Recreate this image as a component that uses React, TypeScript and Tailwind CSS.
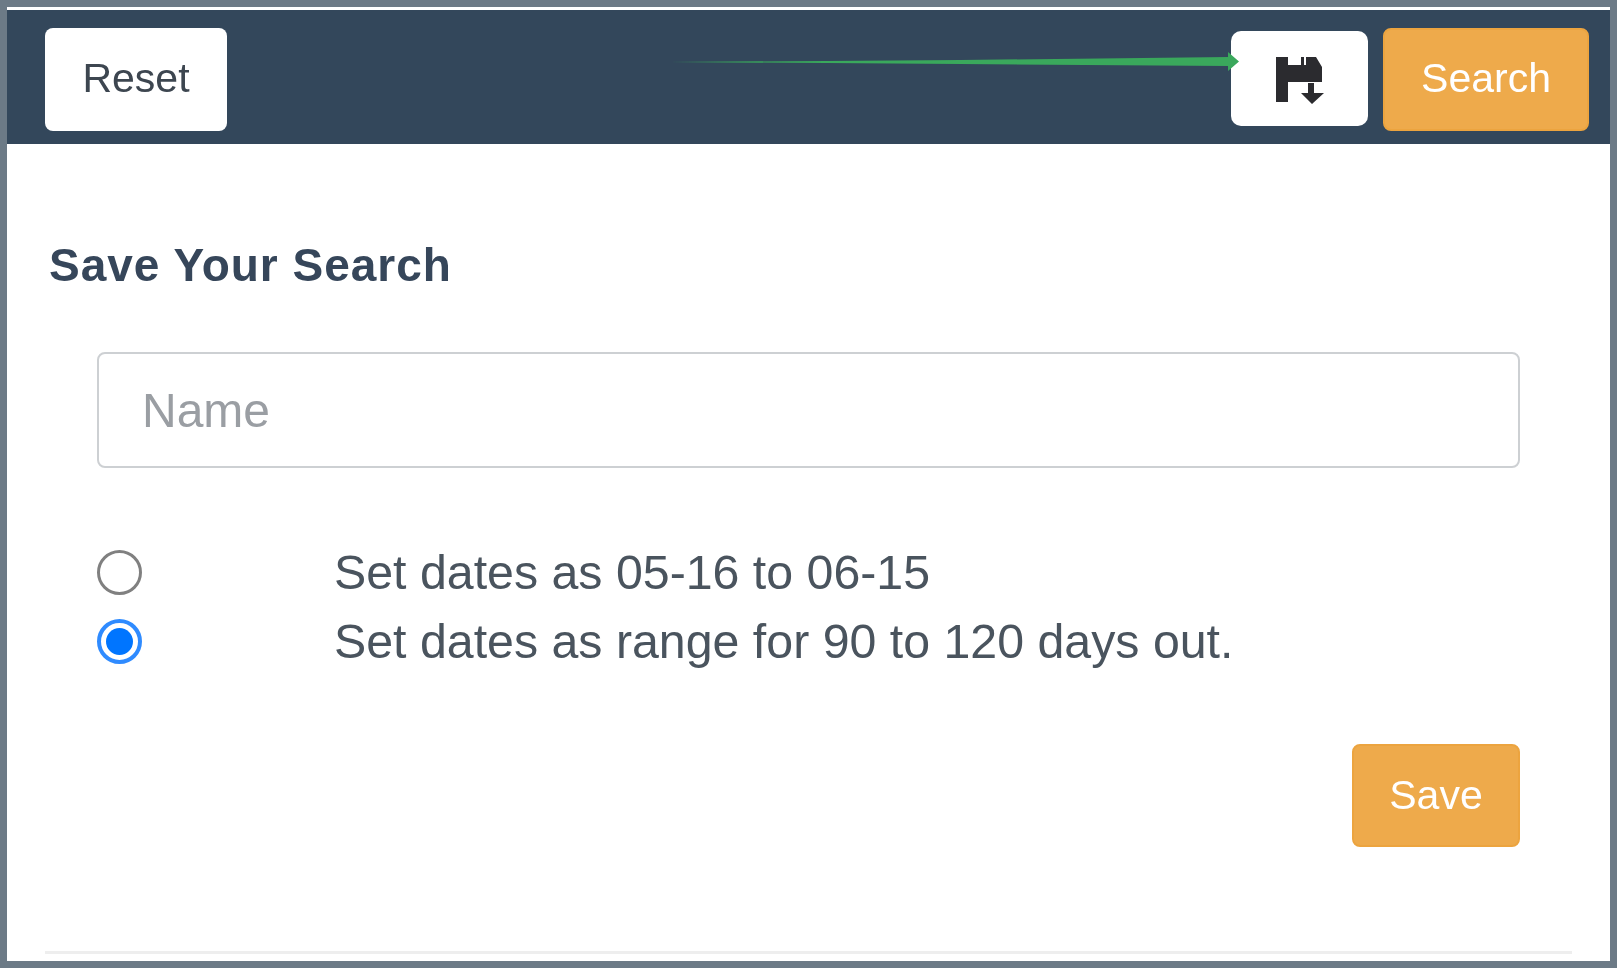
import React from 'react'

const orange = 'bg-[#eeaa4b] text-white border-[2px] border-[#eca43f]'

function Radio({ checked, label }: { checked?: boolean; label: string }) {
  return (
    <label className="flex items-center h-[69px]">
      <span className="w-[237px] shrink-0">
        {checked ? (
          <span className="w-[45px] h-[45px] rounded-full border-[4px] border-[#2f8bff] flex items-center justify-center">
            <span className="w-[27px] h-[27px] rounded-full bg-[#0075ff]" />
          </span>
        ) : (
          <span className="block w-[45px] h-[45px] rounded-full border-[3px] border-[#808080] bg-white" />
        )}
      </span>
      <span>{label}</span>
    </label>
  )
}

export default function App() {
  return (
    <div className="w-[1617px] h-[968px] bg-[#6c7a86] p-[7px] font-['Liberation_Sans',Arial,sans-serif] relative overflow-hidden blur-[0.7px]">
      <div className="h-full bg-white flex flex-col pt-[3px]">
        {/* top bar */}
        <div className="h-[134px] shrink-0 bg-[#33475b] flex items-center justify-between pl-[38px] pr-[21px] pt-[4px]">
          <button className="w-[182px] h-[103px] bg-white rounded-[8px] text-[41px] text-[#3d4650]">Reset</button>
          <div className="flex items-center gap-[15px]">
            <button className="w-[137px] h-[95px] mb-[2px] bg-white rounded-[10px] flex items-center justify-center">
              <svg className="mt-[6px]" width="48" height="48" viewBox="0 0 48 48">
                <path d="M0 0H12V8H25V0H28V8H30V0H40L46 10V25H12V45H0Z" fill="#2b2b2f" />
                <path d="M32 26H38V36H48L36 47L25 36H32Z" fill="#2b2b2f" />
              </svg>
            </button>
            <button className={`w-[206px] h-[103px] rounded-[8px] text-[41px] ${orange}`}>Search</button>
          </div>
        </div>

        {/* form */}
        <div className="flex-1 flex flex-col pl-[42px] pr-[90px] text-[#4a545e] text-[48.3px]">
          <h2 className="mt-[93px] text-[46px] leading-[56px] font-bold tracking-[1px] text-[#36465a]">Save Your Search</h2>
          <div className="ml-[48px] mt-[59px]">
            <input
              placeholder="Name"
              className="w-full h-[116px] px-[43px] border-[2px] border-[#cdd0d3] rounded-[8px] text-[48px] placeholder:text-[#9a9ea3] outline-none"
            />
            <div className="mt-[70px]">
              <Radio label="Set dates as 05-16 to 06-15" />
              <Radio checked label="Set dates as range for 90 to 120 days out." />
            </div>
            <div className="flex justify-end mt-[68px]">
              <button className={`w-[168px] h-[103px] rounded-[8px] text-[41px] ${orange}`}>Save</button>
            </div>
          </div>
        </div>

        <div className="h-[3px] mx-[38px] mb-[7px] bg-[#eeeeee]" />
      </div>

      {/* green callout arrow */}
      <svg className="absolute left-[660px] top-[50px]" width="580" height="22" viewBox="0 0 580 22">
        <path d="M10 12 L300 10 L568 7 V2 L579 11.5 L568 21 V16 L300 14 Z" fill="#3aa85c" />
      </svg>
    </div>
  )
}
